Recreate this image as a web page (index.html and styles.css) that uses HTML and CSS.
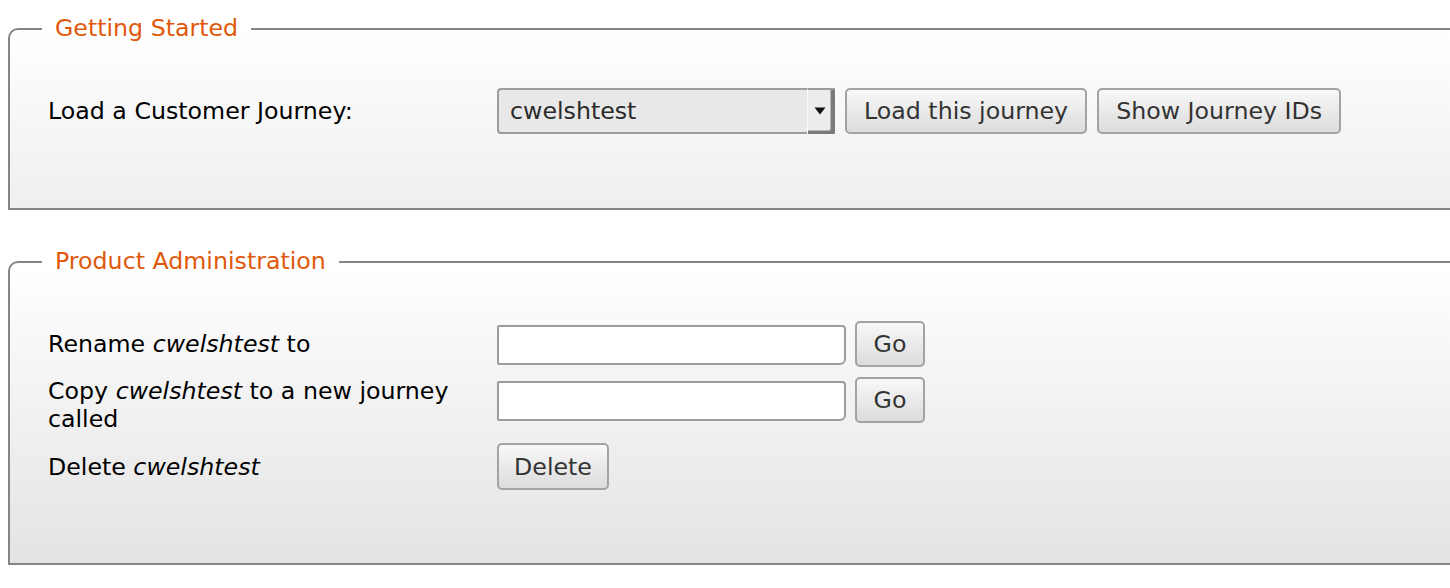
FILE: index.html
```html
<!DOCTYPE html>
<html lang="en">
<head>
<meta charset="utf-8">
<title>Customer Journey</title>
<link rel="stylesheet" href="styles.css">
</head>
<body>
<fieldset class="panel panel-start">
  <legend class="panel-title">Getting Started</legend>
  <div class="form-grid">
    <div class="label"><span>Load a Customer Journey:</span></div>
    <div class="controls">
      <div class="select">
        <span class="select-value">cwelshtest</span>
        <span class="select-arrow"><svg width="12" height="8" viewBox="0 0 12 8"><path d="M0.5 0.5 L11.5 0.5 L6 7.5 Z" fill="#111"/></svg></span>
      </div>
      <button class="btn btn-wide">Load this journey</button>
      <button class="btn btn-wide">Show Journey IDs</button>
    </div>
  </div>
</fieldset>

<fieldset class="panel panel-admin">
  <legend class="panel-title">Product Administration</legend>
  <div class="form-grid">
    <div class="label"><span>Rename <em>cwelshtest</em> to</span></div>
    <div class="controls">
      <input class="text-input" type="text">
      <button class="btn btn-go">Go</button>
    </div>

    <div class="label"><span>Copy <em>cwelshtest</em> to a new journey called</span></div>
    <div class="controls">
      <input class="text-input" type="text">
      <button class="btn btn-go">Go</button>
    </div>

    <div class="label"><span>Delete <em>cwelshtest</em></span></div>
    <div class="controls">
      <button class="btn btn-delete">Delete</button>
    </div>
  </div>
</fieldset>
</body>
</html>
```

FILE: styles.css
```css
html, body {
  margin: 0;
  background: #fff;
  overflow: hidden;
}

body {
  padding: 15px 0 0 8px;
  font-family: "DejaVu Sans", Verdana, sans-serif;
  font-size: 23.7px;
  line-height: 28px;
  color: #000;
}

.panel {
  margin: 0 -40px 0 0;
  padding: 46px 0 74px 38px;
  border: 2px solid #858585;
  border-radius: 10px 0 0 0;
  background: linear-gradient(to bottom, #ffffff 0px, #c8c8c8 600px);
  min-width: 0;
}

.panel-admin {
  margin-top: 38px;
  padding-bottom: 73px;
}

.panel-title {
  margin-left: -6px;
  padding: 0 13px;
  color: #e0590b;
  font-size: 23.7px;
  line-height: 27px;
}

.form-grid {
  display: grid;
  grid-template-columns: 449px 1fr;
  row-gap: 10px;
}

.label {
  min-height: 46px;
  display: flex;
  align-items: center;
}

.label em {
  font-style: italic;
}

.controls {
  display: flex;
  align-items: center;
  align-self: start;
  gap: 10px;
}

.select {
  box-sizing: border-box;
  width: 338px;
  height: 46px;
  display: flex;
  align-items: stretch;
  border: 2px solid #9c9c9c;
  border-right: none;
  border-radius: 4px 0 0 4px;
  background: #e8e8e8;
  color: #2a2a2a;
}

.select-value {
  flex: 1;
  display: flex;
  align-items: center;
  padding-left: 11px;
}

.select-arrow {
  width: 28px;
  box-sizing: border-box;
  display: flex;
  align-items: center;
  justify-content: center;
  margin: -2px 0;
  background: #ececec;
  border-left: 1px solid #fbfbfb;
  border-top: 2px solid #9c9c9c;
  box-shadow: inset -4px -3px 0 #7a7a7a, inset -5px -4px 0 #b4b4b4;
  padding-right: 4px;
  padding-bottom: 2px;
  border-radius: 0 2px 2px 0;
}

.btn {
  box-sizing: border-box;
  height: 46px;
  padding: 0 17px;
  font-family: "DejaVu Sans", Verdana, sans-serif;
  font-size: 23.7px;
  color: #333;
  border: 2px solid #a3a3a3;
  border-radius: 5px;
  background: linear-gradient(to bottom, #f8f8f8, #dcdcdc);
  cursor: pointer;
}

.btn-wide {
  min-width: 242px;
}

.btn-go {
  width: 70px;
  padding: 0;
}

.btn-delete {
  width: 112px;
  height: 47px;
  padding: 0;
}

.text-input {
  box-sizing: border-box;
  width: 349px;
  height: 40px;
  margin: 2px -1px 0 0;
  border: 2px solid #9c9c9c;
  border-radius: 2px 4px 6px 2px;
  background: #fff;
  font-family: "DejaVu Sans", Verdana, sans-serif;
  font-size: 23.7px;
}
```
